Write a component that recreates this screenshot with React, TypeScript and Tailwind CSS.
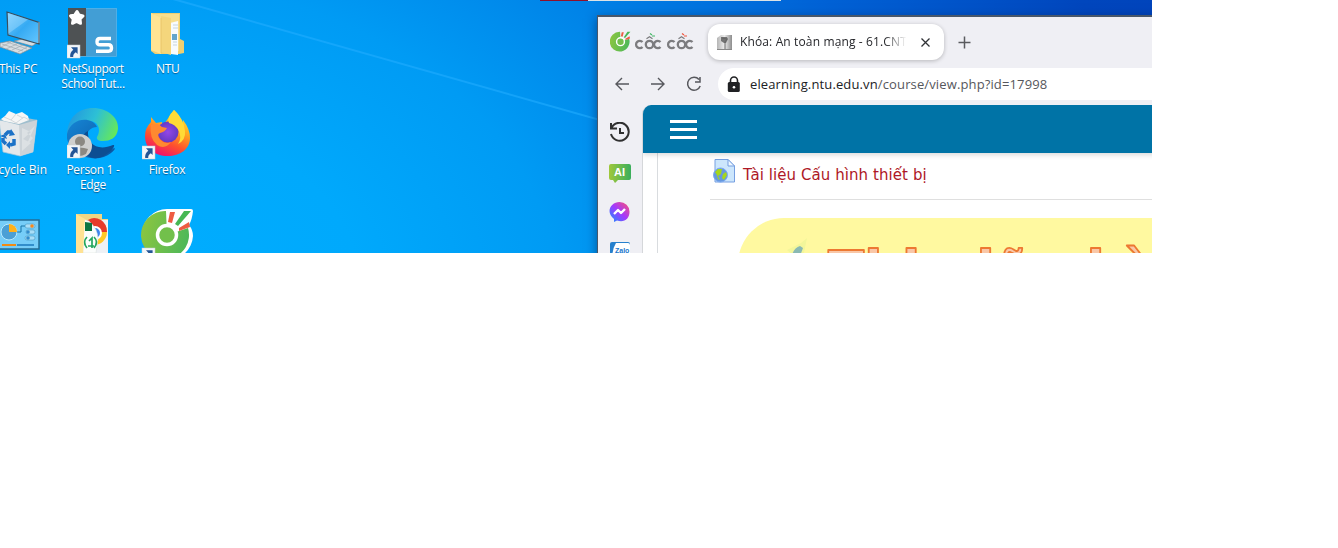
import React from "react";

const ui = "font-['Open_Sans','Noto_Sans',sans-serif]";

function Shortcut({ x, y }: { x: number; y: number }) {
  return (
    <g transform={`translate(${x} ${y})`}>
      <rect width="13" height="13" fill="#f3f6f9" stroke="#c7cdd3" strokeWidth=".5" />
      <path d="M4 2.300h6.600v6.600L8.800 7.200Q6 8.800 6.200 12H3.200Q2.600 7.600 6.300 4.700z" fill="#245596" />
    </g>
  );
}

function ThisPc() {
  return (
    <svg width="52" height="56" viewBox="0 0 52 56">
      <defs>
        <linearGradient id="pc" x1="0" y1="0" x2="1" y2="1">
          <stop offset="0" stopColor="#7ed0ff" /><stop offset=".5" stopColor="#35aaf3" /><stop offset="1" stopColor="#65c7ff" />
        </linearGradient>
      </defs>
      <path d="M14 41l14-3 11 4-7 4z" fill="#d6dde2" stroke="#7a858c" strokeWidth=".6" />
      <path d="M22 35l8 3v4l-8-2z" fill="#aab3b8" />
      <path d="M7 12l32 10.500v21.500L8 35z" fill="url(#pc)" stroke="#3b4e5d" strokeWidth="1.200" />
      <path d="M8 13l20 6.500L8 34z" fill="#b9e6ff" opacity=".35" />
      <path d="M39 22v21" stroke="#9dabb4" />
      <path d="M0 43l10-2 22 7-12 6L0 47z" fill="#d8dee2" stroke="#7f8b92" strokeWidth=".7" />
      <path d="M2 44l21 7M7 42l20 7M1 47l10-5M6 49l11-5M12 50l11-5M18 52l9-5" stroke="#9aa5ab" strokeWidth=".6" />
    </svg>
  );
}

function NetSupport() {
  return (
    <svg width="52" height="52" viewBox="0 0 52 52">
      <rect x="1.500" y="1.500" width="48" height="48" fill="#429ed5" stroke="#63b7e7" strokeWidth=".7" />
      <rect x="1" y="1" width="18" height="48" fill="#4e5254" />
      <path d="M10 4.500l2 3.500 4 1-3 3 .5 4.300-4-1.800-4 1.800.8-4L3.500 8.800l4-.5z" fill="#fff" stroke="#fff" strokeWidth="3" strokeLinejoin="round" />
      <path d="M44 31.500H33q-3 0-3 3.200t3 3.100h8.500q3 0 3 3.200t-3 3.200H29" fill="none" stroke="#fff" strokeWidth="3.400" />
      <Shortcut x={0} y={38} />
    </svg>
  );
}

function FolderIcon() {
  return (
    <svg width="40" height="50" viewBox="0 0 40 50">
      <path d="M1 3h29v26l4 2v12l-5 1H5l-4-3z" fill="#efcf73" />
      <path d="M4 4h25v37H4z" fill="#f8df8d" />
      <path d="M20 13l8-2v34l-7-1z" fill="#f8fbfd" />
      <path d="M23 15h5M23 18h5M23 32h4M23 35h4" stroke="#c6d5de" />
      <path d="M22 24h5v6h-5z" fill="#63a5cc" />
      <path d="M11 6l10 2v37l-10-3z" fill="#f4d67c" />
      <path d="M1 3l10 5v36L1 40z" fill="#ffe493" /><path d="M11 8v35" stroke="#e1bd62" strokeWidth=".7" />
    </svg>
  );
}

function Bin() {
  return (
    <svg width="52" height="52" viewBox="0 0 52 52">
      <path d="M-1 12l19 3 19-3-4 32-13 4-17-4z" fill="#e4e8eb" stroke="#a8c6d8" strokeWidth=".7" />
      <path d="M19 15l18-3-4 32-13 4z" fill="#ccd3d8" />
      <path d="M-1 12l18-4 20 4-18 5z" fill="#9fbfce" />
      <path d="M1 11l4-3 4-5 7 3 6-2 6 4 1 4-10 4-15-3z" fill="#f5f6f6" />
      <path d="M4 9l7 3 5-6M11 12l5 3 8-6 5 3M17 7l6 3" fill="none" stroke="#d4d9dc" />
      <path d="M22 20l9 4-8 7 8 4-9 8zM35 18l-8 7 6 5-7 8" fill="#dce1e4" />
      <g fill="none" stroke="#1c72c7" strokeWidth="3.500"><path d="M5 27l3-3h3" /><path d="M14 31l0 5-4 1" /><path d="M6 36l-3-3v-3" /></g>
      <path d="M11 21l4 6-6 1zM10 33v8l-4-4zM0 28l5-2 2 5z" fill="#1c72c7" />
    </svg>
  );
}

function EdgeIcon() {
  return (
    <svg width="52" height="53" viewBox="0 0 52 53">
      <defs>
        <linearGradient id="ea" x1="0" y1=".3" x2="1" y2=".6">
          <stop offset="0" stopColor="#2297df" /><stop offset=".5" stopColor="#2dc0d5" /><stop offset="1" stopColor="#65e85b" />
        </linearGradient>
        <linearGradient id="eb" x1="0" y1="0" x2="1" y2="1">
          <stop offset="0" stopColor="#1686d5" /><stop offset="1" stopColor="#0a519d" />
        </linearGradient>
      </defs>
      <path d="M0 27C1 10 12 1 26 1c15 0 26 10 25 21-1 9-8 12-15 12-5 0-8-2-5-6 5-12-9-24-31-1z" fill="url(#ea)" />
      <path d="M0 27C4 10 25 9 30 20c-8 0-13 8-9 16 5 11 18 12 26 5 2 0 0 3-3 5-8 7-22 7-32 1C3 42-1 34 0 27z" fill="url(#eb)" />
      <path d="M21 24c-1 12 9 21 25 14 3-1 0 5-5 8-8 7-16 6-22 2-8-8-5-21 2-24z" fill="#0d4e92" />
      <circle cx="13" cy="39" r="12" fill="#cfcfce" /><circle cx="13" cy="34.500" r="5" fill="#8b8882" />
      <path d="M5 42q8-3 16 0l-2 5q-7 4-13 0z" fill="#8b8882" />
      <Shortcut x={0} y={38} />
    </svg>
  );
}

function FirefoxIcon() {
  return (
    <svg width="50" height="52" viewBox="0 0 50 52">
      <defs>
        <linearGradient id="fa" x1=".8" y1="0" x2=".35" y2="1">
          <stop offset="0" stopColor="#ffef36" /><stop offset=".4" stopColor="#ffa620" /><stop offset=".7" stopColor="#ff512d" /><stop offset="1" stopColor="#ef106e" />
        </linearGradient>
        <radialGradient id="fb"><stop offset="0" stopColor="#9546e8" /><stop offset="1" stopColor="#653ac4" /></radialGradient>
      </defs>
      <path d="M32 2q6 5 8 14 1-2 1-4 7 9 7 18c0 11-10 18-22 18C12 48 3 40 3 28q0-8 6-14v-5l5 6 6-1v5z" fill="url(#fa)" />
      <circle cx="26" cy="24" r="10.500" fill="url(#fb)" />
      <path d="M9 17q7-3 11 2l5 1q-2 4-7 5-3 1-1 5 5 7 12 4-6 8-14 3-8-7-6-20z" fill="#ff8930" />
      <path d="M32 2q-8 8-5 13 6 1 10 8 3 7-1 13 8-4 7-13-1-12-11-21z" fill="#ffdb36" />
      <Shortcut x={0} y={38} />
    </svg>
  );
}

function ControlIcon() {
  return (
    <svg width="52" height="40" viewBox="0 0 52 40">
      <rect x="-3" y="9" width="42" height="29" fill="#76cdf8" stroke="#236c96" strokeWidth="1.500" />
      <circle cx="9" cy="21" r="8" fill="#4b9fd5" stroke="#b7eaff" />
      <path d="M9 21V13a8 8 0 0 1 8 8z" fill="#ffb11b" />
      <path d="M17 21h4v-6h5" fill="none" stroke="#1675a8" />
      <g fill="#a9def7" stroke="#438db7" strokeWidth=".5"><rect x="25" y="13" width="10" height="4" rx="2" /><rect x="26" y="19" width="9" height="4" rx="2" /><rect x="25" y="25" width="10" height="4" rx="2" /></g>
      <circle cx="32" cy="15" r="1.800" fill="#f8881c" /><circle cx="28" cy="21" r="1.800" fill="#318dce" /><circle cx="28" cy="27" r="1.800" fill="#318dce" />
      <path d="M2 34h14" stroke="#f18b14" strokeWidth="2" /><path d="M17 34h17" stroke="#1c78bd" strokeWidth="1.500" />
    </svg>
  );
}

function SoftwareFolder() {
  return (
    <svg width="36" height="41" viewBox="0 0 36 41">
      <path d="M1 2h26v5h6v34H1z" fill="#efd584" /><path d="M16 8h17v33H16z" fill="#eef1f5" />
      <circle cx="19" cy="20" r="13" fill="#ffc928" /><path d="M8 13Q16 2 26 8q6 4 6 12H20z" fill="#e63a2c" />
      <circle cx="20" cy="21" r="6" fill="#3e86ee" stroke="#fff" strokeWidth="2" />
      <path d="M8 7l6 2q9 8 9 18l-2 14H8z" fill="#fbfdfc" stroke="#d5ddd8" strokeWidth=".5" />
      <path d="M10 10l7 1v8h-7z" fill="#0b7642" />
      <path d="M12 25q-5 5 0 11M19 25q5 5 0 11M14 29l3-3v10M13 34h6" stroke="#24a65f" strokeWidth="1.700" fill="none" />
      <path d="M1 2l9 5-2 34H1z" fill="#ffe293" />
    </svg>
  );
}

function CocIcon({ small = false }: { small?: boolean }) {
  return (
    <svg width={small ? 21 : 53} height={small ? 21 : 53} viewBox={small ? "1 1 50 51" : "0 0 53 53"}>
      <defs><linearGradient id={small ? "cs" : "cb"} x1="0" y1=".4" x2="1" y2=".6"><stop offset="0" stopColor="#8bc540" /><stop offset="1" stopColor="#4cb85a" /></linearGradient></defs>
      {!small && <path d="M26 1h24q2 0 2 2-1 9-4 14 4 5 4 11a25.500 25.500 0 1 1-26-27z" fill="#fff" />}
      <path d="M25 3A24 24 0 1 0 47 20L26 27z" fill={`url(#${small ? "cs" : "cb"})`} />
      <circle cx="26" cy="27" r="9.500" fill="#72c04b" stroke="#fff" strokeWidth="3.500" />
      <path d="M27 14l2-10h5l-3 11zM38 20l10-6 1 5-11 4z" fill="#ee5b42" />
      <path d="M34 16L43 3h7L37 18z" fill="#46b753" />
      {!small && <Shortcut x={1} y={40} />}
    </svg>
  );
}

function DesktopItem({ className, labelClass, label, children }: { className: string; labelClass: string; label?: string; children: React.ReactNode }) {
  return (
    <div className={`absolute flex flex-col items-center ${className}`}>
      {children}
      {label && <div className={`absolute text-center text-[12px] leading-[15px] whitespace-pre text-white [text-shadow:0_1px_1px_#075b92] ${labelClass}`}>{label}</div>}
    </div>
  );
}

function BrowserLogo() {
  return (
    <div className="flex items-start gap-[3px]">
      <CocIcon small />
      <svg width="62" height="23" viewBox="0 0 62 23">
        <g fill="none" stroke="#7c7c7f" strokeWidth="2.300">
          <path d="M8.500 11A3.700 3.700 0 1 0 8.500 16M26.500 11A3.700 3.700 0 1 0 26.500 16M40.500 11A3.700 3.700 0 1 0 40.500 16M58.500 11A3.700 3.700 0 1 0 58.500 16" />
          <circle cx="15.500" cy="13.500" r="3.700" /><circle cx="47.500" cy="13.500" r="3.700" />
          <path d="M12.500 7.800l3-2 3 2M44.500 7.800l3-2 3 2" strokeWidth="1.200" />
        </g>
        <path d="M16 2.500l2 1.500M18 5h3" stroke="#44b866" strokeWidth="1.200" /><path d="M48 2.500l2 1.500M50 5h3" stroke="#ef573e" strokeWidth="1.200" />
      </svg>
    </div>
  );
}

function Tabs() {
  return (
    <div className="flex h-[50px] items-center pl-[12px]">
      <div className="w-[98px]"><BrowserLogo /></div>
      <div className="flex h-9 w-[236px] items-center rounded-[12px] bg-white pl-[9px] shadow-[0_1px_4px_rgba(0,0,0,.24)]">
        <svg width="15" height="15" viewBox="0 0 15 15">
          <defs><linearGradient id="fav"><stop stopColor="#b5b5b5" /><stop offset=".5" stopColor="#ededed" /><stop offset="1" stopColor="#8d8d8d" /></linearGradient></defs>
          <path d="M0 3l4-3h11v15H0z" fill="url(#fav)" /><path d="M4 2h6l1 2-2 4H7L4 6z" fill="#747474" /><path d="M5 3l5 1-2 3M8 7v7" stroke="#666" fill="none" /><path d="M0 14.500h15" stroke="#888" />
        </svg>
        <div className="ml-[8px] w-[168px] overflow-hidden text-[12px] leading-5 whitespace-nowrap text-[#25262a] [mask-image:linear-gradient(90deg,black_86%,transparent_99%)]"><span className="tracking-[.13px]">Khóa: An toàn mạng - 61.CNT</span></div>
        <svg className="ml-[12px]" width="11" height="11"><path d="M1.500 1.500l8 8m0-8l-8 8" stroke="#303236" strokeWidth="1.300" /></svg>
      </div>
      <svg className="ml-[14px]" width="13" height="13"><path d="M6.500.5v12M.5 6.500h12" stroke="#5a5b5f" strokeWidth="1.500" /></svg>
    </div>
  );
}

function Toolbar() {
  return (
    <div className="flex h-8 items-center">
      <svg className="ml-[17px]" width="15" height="14" fill="none" stroke="#57585d" strokeWidth="1.400"><path d="M14 7H1.500M7 1L1 7l6 6" /></svg>
      <svg className="ml-[20px]" width="15" height="14" fill="none" stroke="#57585d" strokeWidth="1.400"><path d="M1 7h12.500M8 1l6 6-6 6" /></svg>
      <svg className="ml-[21px]" width="16" height="16" fill="none" stroke="#57585d" strokeWidth="1.500"><path d="M13 3.500A6.500 6.500 0 1 0 14.200 10M14 1v5H9" /></svg>
      <div className="ml-[16px] flex h-8 flex-1 items-center rounded-l-[16px] bg-white pl-[9px]">
        <svg width="14" height="17" viewBox="0 0 14 17"><path d="M3.500 8V4.500a3.500 3.500 0 0 1 7 0V8" fill="none" stroke="#202124" strokeWidth="1.600" /><rect x=".8" y="6" width="12" height="10" rx="1.500" fill="#202124" /><circle cx="7" cy="11.300" r="1.300" fill="#fff" /></svg>
        <div className="ml-[9px] text-[13px] leading-5 tracking-[.13px] whitespace-nowrap text-[#56575c]"><span className="text-[#202124]">elearning.ntu.edu.vn</span>/course/view.php?id=17998</div>
      </div>
    </div>
  );
}

function Sidebar() {
  return (
    <div className="flex w-[44px] shrink-0 flex-col items-start pl-[11px]">
      <svg className="mt-[17px]" width="22" height="22" viewBox="0 0 22 22" fill="none" stroke="#303030" strokeWidth="2">
        <path d="M2.500 6A9 9 0 1 1 2 12M2 1v5.500h6M11 6v5h4" />
      </svg>
      <svg className="mt-[19px]" width="23" height="21" viewBox="0 0 23 21">
        <defs><linearGradient id="ai"><stop stopColor="#a0c83b" /><stop offset="1" stopColor="#3aae5c" /></linearGradient></defs>
        <path d="M2 1h18q2 0 2 2v12q0 2-2 2H9l-3 3-2-3H2q-2 0-2-2V3q0-2 2-2z" fill="url(#ai)" />
        <text x="5" y="13" className="font-['Liberation_Sans'] text-[11px] font-bold" fill="#fff">AI</text>
      </svg>
      <svg className="mt-[17px]" width="21" height="22" viewBox="0 0 21 22">
        <defs><linearGradient id="ms" x1="0" y1="1" x2="1" y2="0"><stop stopColor="#1294ff" /><stop offset=".5" stopColor="#a239ff" /><stop offset="1" stopColor="#ff526f" /></linearGradient></defs>
        <path d="M10.500 1A10 9.700 0 0 1 20.500 10.700C20.500 18 15 22 8 19.500l-3 1.500v-3C-4 11 2 1 10.500 1z" fill="url(#ms)" /><path d="M5 13l4-4 3 3 4-4" fill="none" stroke="#fff" strokeWidth="2.400" strokeLinejoin="round" />
      </svg>
      <svg className="mt-[18px]" width="22" height="21" viewBox="0 0 22 21">
        <rect x="1" y="1" width="20" height="20" rx="2" fill="#2680cd" /><path d="M7 2h12q2 0 2 2v17H4Q2 10 7 2z" fill="#fff" />
        <text x="6" y="12" className="font-['Liberation_Sans'] text-[7px] font-bold" fill="#1976cc">Zalo</text>
      </svg>
    </div>
  );
}

function Page() {
  return (
    <main className="min-w-0 flex-1 overflow-hidden rounded-tl-[9px] border-l border-[#d5d7da] bg-white">
      <header className="relative flex h-12 items-center bg-[#0073a6] pl-[27px] shadow-[0_2px_5px_rgba(0,0,0,.15)]">
        <div className="flex flex-col gap-[5px]"><i className="h-[3px] w-[27px] bg-white" /><i className="h-[3px] w-[27px] bg-white" /><i className="h-[3px] w-[27px] bg-white" /></div>
      </header>
      <div className="ml-[14px] h-[100px] border-l border-[#d9dcdf]">
        <div className="ml-[52px] flex h-[47px] items-start border-b border-[#dfdfdf] pt-[5px]">
          <svg className="ml-[2px]" width="24" height="25" viewBox="0 0 24 25">
            <path d="M3 1.500h13l6.500 6.500v16H3z" fill="#cce6fc" stroke="#769fe1" /><path d="M16 1.500v6.500h6.500z" fill="#eef8ff" stroke="#769fe1" />
            <circle cx="8.500" cy="17" r="7" fill="#6798dd" stroke="#7daaf0" /><path d="M3 14l3-3h4l-1 5-3 2 2 4-2-1-1-4zM11 16l3-2 1 3-3 5-2-2z" fill="#a6d61b" />
          </svg>
          <a className="ml-[7px] mt-[6px] font-['DejaVu_Sans',sans-serif] text-[15px] leading-[22px] tracking-[.07px] whitespace-nowrap text-[#ae1826]">Tài liệu Cấu hình thiết bị</a>
        </div>
        <div className="mt-[18px] ml-[80px] h-[60px] overflow-hidden rounded-tl-[46px] bg-[#fff9a0]">
          <svg width="420" height="60">
            <path d="M49 32l14-7 6-5-3 15-10 3z" fill="#f3f69a" /><path d="M54 37q2-7 8-9l3 2-3 8z" fill="#8ab9b3" />
            <text x="90" y="70.500" strokeLinejoin="round" className="font-['DejaVu_Sans',sans-serif] text-[53px] font-bold" fill="#f9c7a7" stroke="#ed7932" strokeWidth="1.800">Thi giữa kỳ</text>
          </svg>
        </div>
      </div>
    </main>
  );
}

export default function App() {
  return (
    <div className="h-[548px] w-full bg-white">
      <div className={`relative h-[253px] w-[1152px] overflow-hidden bg-[radial-gradient(ellipse_1300px_900px_at_100px_290px,#00aeff_0%,#00a9fc_20%,#009bf4_35%,#0084e8_48%,#0062d6_64%,#0046bd_82%,#0040b9_100%)] ${ui}`}>
        <svg className="absolute inset-0" width="600" height="130"><path d="M120-16L600 120" stroke="#22adff" strokeWidth="2" opacity=".6" /></svg>
        <div className="absolute top-0 left-[540px] flex h-px w-[241px] bg-[#dce3e6]"><span className="w-12 bg-[#8f102b]" /></div>
        <DesktopItem className="top-0 left-0" labelClass="top-[61px] left-[-1px] tracking-[-.35px]" label="This PC"><ThisPc /></DesktopItem>
        <DesktopItem className="top-[7px] left-[67px]" labelClass="top-[54px] tracking-[-.35px]" label={"NetSupport\nSchool Tut..."}><NetSupport /></DesktopItem>
        <DesktopItem className="top-[10px] left-[150px]" labelClass="top-[51px] left-[6px] tracking-[-.3px]" label="NTU"><FolderIcon /></DesktopItem>
        <DesktopItem className="top-[108px] left-0" labelClass="top-[54px] right-[5px]" label="Recycle Bin"><Bin /></DesktopItem>
        <DesktopItem className="top-[107px] left-[67px]" labelClass="top-[55px] tracking-[-.3px]" label={"Person 1 -\nEdge"}><EdgeIcon /></DesktopItem>
        <DesktopItem className="top-[108px] left-[142px]" labelClass="top-[54px] tracking-[-.3px]" label="Firefox"><FirefoxIcon /></DesktopItem>
        <DesktopItem className="top-[211px] left-0" labelClass=""><ControlIcon /></DesktopItem>
        <DesktopItem className="top-[212px] left-[75px]" labelClass=""><SoftwareFolder /></DesktopItem>
        <DesktopItem className="top-[208px] left-[141px]" labelClass=""><CocIcon /></DesktopItem>
        <div className="absolute top-[15px] left-[597px] flex h-[250px] w-[560px] flex-col border-t-2 border-l border-[#48576a] bg-[#efeff4] shadow-[0_3px_10px_rgba(0,20,60,.5)]">
          <Tabs /><div className="h-px" /><Toolbar />
          <div className="mt-[5px] flex flex-1"><Sidebar /><Page /></div>
        </div>
      </div>
    </div>
  );
}
